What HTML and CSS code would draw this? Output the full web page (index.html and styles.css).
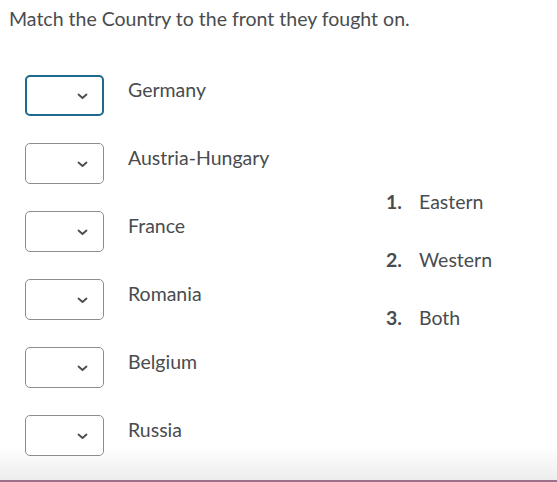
FILE: index.html
```html
<!DOCTYPE html>
<html lang="en">
<head>
<meta charset="utf-8">
<title>Match</title>
<link rel="stylesheet" href="styles.css">
</head>
<body>
<h1 class="title">Match the Country to the front they fought on.</h1>
<div class="match">
  <div class="choices">
    <div class="row"><span class="select focused"><svg class="chev" width="11" height="7" viewBox="0 0 11 7"><path d="M1.5 1.5 L5.5 5 L9.5 1.5" fill="none" stroke="#494c4e" stroke-width="1.8" stroke-linecap="round" stroke-linejoin="round"/></svg></span><span class="label">Germany</span></div>
    <div class="row"><span class="select"><svg class="chev" width="11" height="7" viewBox="0 0 11 7"><path d="M1.5 1.5 L5.5 5 L9.5 1.5" fill="none" stroke="#494c4e" stroke-width="1.8" stroke-linecap="round" stroke-linejoin="round"/></svg></span><span class="label">Austria-Hungary</span></div>
    <div class="row"><span class="select"><svg class="chev" width="11" height="7" viewBox="0 0 11 7"><path d="M1.5 1.5 L5.5 5 L9.5 1.5" fill="none" stroke="#494c4e" stroke-width="1.8" stroke-linecap="round" stroke-linejoin="round"/></svg></span><span class="label">France</span></div>
    <div class="row"><span class="select"><svg class="chev" width="11" height="7" viewBox="0 0 11 7"><path d="M1.5 1.5 L5.5 5 L9.5 1.5" fill="none" stroke="#494c4e" stroke-width="1.8" stroke-linecap="round" stroke-linejoin="round"/></svg></span><span class="label">Romania</span></div>
    <div class="row"><span class="select"><svg class="chev" width="11" height="7" viewBox="0 0 11 7"><path d="M1.5 1.5 L5.5 5 L9.5 1.5" fill="none" stroke="#494c4e" stroke-width="1.8" stroke-linecap="round" stroke-linejoin="round"/></svg></span><span class="label">Belgium</span></div>
    <div class="row"><span class="select"><svg class="chev" width="11" height="7" viewBox="0 0 11 7"><path d="M1.5 1.5 L5.5 5 L9.5 1.5" fill="none" stroke="#494c4e" stroke-width="1.8" stroke-linecap="round" stroke-linejoin="round"/></svg></span><span class="label">Russia</span></div>
  </div>
  <ol class="answers">
    <li><span class="num">1.</span><span>Eastern</span></li>
    <li><span class="num">2.</span><span>Western</span></li>
    <li><span class="num">3.</span><span>Both</span></li>
  </ol>
</div>
</body>
</html>
```
FILE: styles.css
```css
html {
  height: 100%;
  background: linear-gradient(to bottom, #ffffff calc(100% - 36px), #ededed calc(100% - 2px), #9c6f8c calc(100% - 2px));
}
body {
  margin: 0;
  font-family: Lato, "Open Sans", sans-serif;
  color: #494c4e;
}
.title {
  margin: 7px 0 0 9px;
  font-size: 19.5px;
  font-weight: normal;
  line-height: 24px;
}
.match {
  display: grid;
  grid-template-columns: 361px 1fr;
  padding-left: 25px;
  margin-top: 44px;
}
.choices {
  display: flex;
  flex-direction: column;
  gap: 27px;
}
.row {
  display: flex;
  align-items: flex-start;
  gap: 24px;
}
.select {
  box-sizing: border-box;
  width: 79px;
  height: 41px;
  border: 1px solid #8c8c8c;
  border-radius: 5px;
  display: flex;
  align-items: center;
  justify-content: flex-end;
  padding: 2px 15px 0 0;
  background: #fff;
}
.select.focused {
  border: 2px solid #1e6a8e;
  padding-right: 14px;
}
.label {
  font-size: 19.5px;
  line-height: normal;
  padding-top: 3px;
}
.answers {
  list-style: none;
  margin: 115px 0 0 0;
  padding: 0;
  display: flex;
  flex-direction: column;
  gap: 35px;
}
.answers li {
  display: flex;
  font-size: 19.5px;
  line-height: normal;
}
.num {
  width: 33px;
  font-weight: bold;
}
```
